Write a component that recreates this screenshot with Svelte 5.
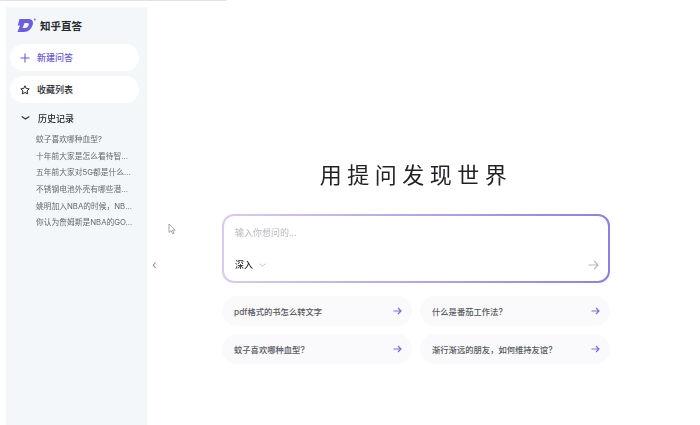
<script>
	const comma = '\uFF0C';
	const history = [
		'蚊子喜欢哪种血型?',
		'十年前大家是怎么看待智...',
		'五年前大家对5G都是什么...',
		'不锈钢电池外壳有哪些潜...',
		`姚明加入NBA的时候${comma}NB...`,
		'你认为詹姆斯是NBA的GO...'
	];
	const suggestions = [
		'pdf格式的书怎么转文字',
		'什么是番茄工作法?',
		'蚊子喜欢哪种血型?',
		`渐行渐远的朋友${comma}如何维持友谊?`
	];
</script>

<div class="topline"></div>
<div class="page">
	<aside class="sidebar">
		<div class="brand">
			<svg class="logo" width="19" height="15" viewBox="0 0 19 15">
				<path d="M2.500 1h9c3.800 0 5.200 2.500 4.200 5.800C14.500 10.800 11.500 14 7 14H0.500L3 7.500H0.800Z" fill="#6f5de0" />
				<path d="M7.500 5h3c1.200 0 1.600.8 1.200 1.900-.6 1.700-1.800 3-3.400 3H5.600Z" fill="#f2f7f9" />
				<circle cx="17.800" cy="1.400" r="0.900" fill="#6f5de0" />
			</svg>
			<span>知乎直答</span>
		</div>
		<button class="pill new">
			<svg width="10" height="10" viewBox="0 0 10 10"><path d="M5 .500v9M.500 5h9" stroke="#6a5bd8" stroke-width="1.100" fill="none" /></svg>
			<span>新建问答</span>
		</button>
		<button class="pill fav">
			<svg width="10" height="10" viewBox="0 0 10 10"><path d="M5 .800l1.300 2.700 2.900.4-2.100 2 .5 3L5 7.500 2.400 8.900l.5-3-2.100-2 2.900-.4Z" stroke="#222" stroke-width="1" stroke-linejoin="round" fill="none" /></svg>
			<span>收藏列表</span>
		</button>
		<div class="history-head">
			<svg width="9" height="6" viewBox="0 0 9 6"><path d="M.700 1.500l3.800 2.500 3.800-2.500" stroke="#333" stroke-width="1.200" fill="none" /></svg>
			<span>历史记录</span>
		</div>
		<ul class="history">
			{#each history as item}
				<li>{item}</li>
			{/each}
		</ul>
	</aside>

	<span class="collapse">‹</span>
	<svg class="cursor" width="9" height="12" viewBox="0 0 9 12"><path d="M1 1v8.500l2.200-1.900 1.500 3.200 1.300-.6-1.500-3.100h2.800Z" fill="#fff" stroke="#8b8f96" stroke-width="0.800" /></svg>

	<main class="main">
		<h1>用提问发现世界</h1>
		<div class="ask">
			<div class="placeholder">输入你想问的...</div>
			<div class="ask-foot">
				<span class="mode">深入
					<svg width="7" height="4" viewBox="0 0 7 4"><path d="M.5.800L3.500 3 6.500.800" stroke="#b5b8bd" stroke-width="0.800" fill="none" /></svg>
				</span>
				<svg width="11" height="10" viewBox="0 0 11 10"><path d="M.5 5h9.500M6.200 1l3.800 4-3.800 4" stroke="#b4b7bb" stroke-width="1.100" fill="none" /></svg>
			</div>
		</div>
		<div class="suggestions">
			{#each suggestions as s}
				<div class="suggestion">
					<span>{s}</span>
					<svg width="9" height="8" viewBox="0 0 9 8"><path d="M.5 4h7.500M5 1l3 3-3 3" stroke="#7a6fd8" stroke-width="1.200" fill="none" /></svg>
				</div>
			{/each}
		</div>
	</main>
</div>

<style>
	:global(body) {
		background: #fff;
		font-family: 'Inter', 'Noto Sans CJK SC', sans-serif;
		overflow: hidden;
	}

	.topline {
		width: 226px;
		height: 1px;
		background: #e2e2e2;
	}

	.page {
		display: flex;
		position: relative;
		height: 418px;
		margin-top: 6px;
		padding-left: 6px;
		box-sizing: border-box;
		filter: blur(0.35px);
	}

	.sidebar {
		width: 141px;
		flex-shrink: 0;
		background: #f3f7f9;
		padding: 0 8px 0 4px;
		box-sizing: border-box;
	}

	.brand {
		display: flex;
		align-items: center;
		gap: 4px;
		height: 37px;
		padding-left: 7px;
		font-size: 10.500px;
		font-weight: 700;
		color: #26282c;
	}

	.pill {
		display: flex;
		align-items: center;
		gap: 7px;
		width: 129px;
		height: 27px;
		padding: 0 0 0 10px;
		border: none;
		border-radius: 14px;
		background: #fff;
		font: inherit;
		font-size: 9px;
		box-sizing: border-box;
	}

	.new {
		color: #6a5bd8;
		font-weight: 500;
	}

	.fav {
		margin-top: 5px;
		color: #26282c;
		font-weight: 500;
	}

	.history-head {
		display: flex;
		align-items: center;
		gap: 8px;
		height: 20px;
		margin-top: 5px;
		padding-left: 11px;
		font-size: 9px;
		font-weight: 500;
		color: #26282c;
	}

	.history {
		list-style: none;
		margin: 4px 0 0 26px;
		padding: 0;
		font-size: 7.750px;
		color: #65686d;
	}

	.history li {
		height: 16.700px;
		line-height: 14px;
		white-space: nowrap;
	}

	.collapse {
		position: absolute;
		left: 152px;
		top: 250px;
		font-size: 12px;
		color: #8c9096;
	}

	.cursor {
		position: absolute;
		left: 168px;
		top: 216px;
	}

	.main {
		width: 388px;
		margin-left: 75px;
	}

	h1 {
		margin: 155px 0 0;
		height: 27px;
		line-height: 27px;
		text-align: center;
		font-size: 22px;
		font-weight: 400;
		letter-spacing: 5.500px;
		color: #1f2125;
	}

	.ask {
		height: 69px;
		margin-top: 25px;
		padding: 11px 9px 10px 11px;
		border: 2px solid transparent;
		border-radius: 12px;
		background:
			linear-gradient(#fff, #fff) padding-box,
			linear-gradient(90deg, #dccbee, #8e80e2) border-box;
		box-sizing: border-box;
		display: flex;
		flex-direction: column;
		justify-content: space-between;
	}

	.placeholder {
		font-size: 9px;
		line-height: 12px;
		color: #b6b9bd;
	}

	.ask-foot {
		display: flex;
		align-items: center;
		justify-content: space-between;
	}

	.mode {
		display: flex;
		align-items: center;
		gap: 6px;
		font-size: 9px;
		font-weight: 500;
		color: #2c2e32;
	}

	.suggestions {
		display: grid;
		grid-template-columns: 190px 190px;
		gap: 8px;
		margin-top: 13px;
	}

	.suggestion {
		display: flex;
		align-items: center;
		justify-content: space-between;
		height: 30px;
		padding: 0 10px 0 12px;
		border-radius: 15px;
		background: #fafafc;
		font-size: 8.300px;
		font-weight: 500;
		color: #55585d;
	}
</style>
